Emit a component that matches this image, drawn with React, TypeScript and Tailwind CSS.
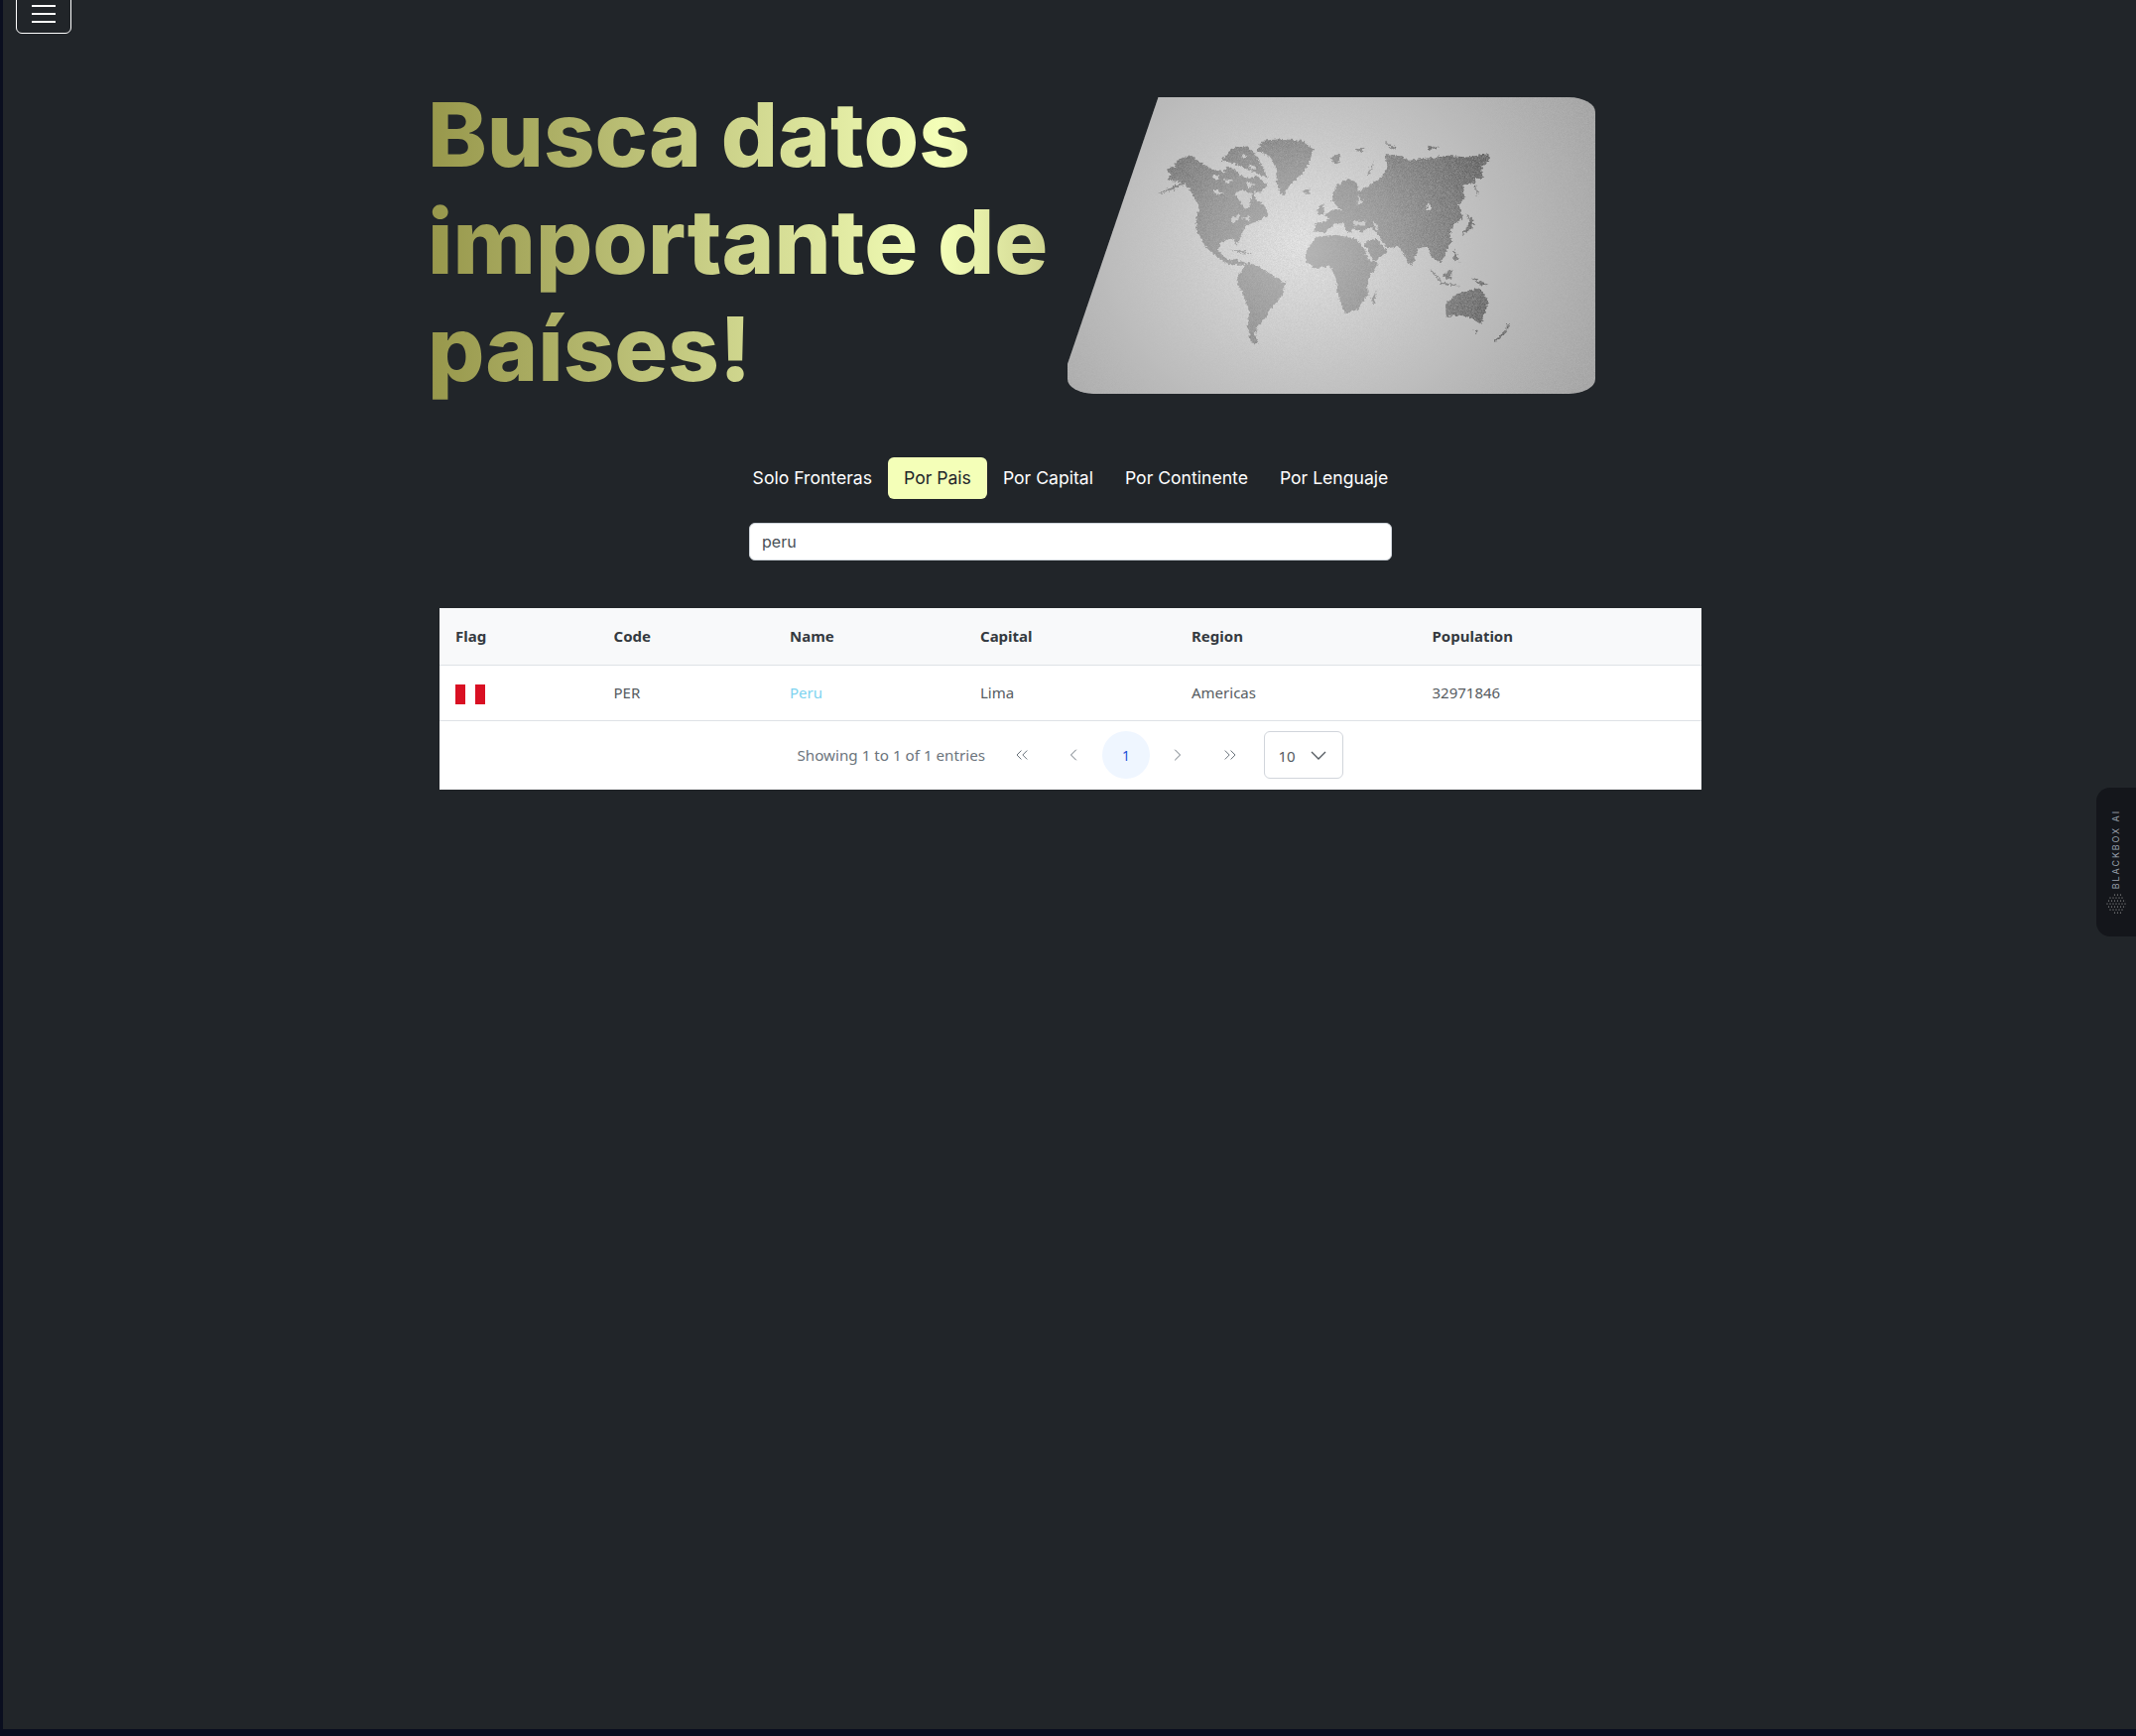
import { ChevronLeft, ChevronRight, ChevronsLeft, ChevronsRight } from "lucide-react";

const tabs = ["Solo Fronteras", "Por Pais", "Por Capital", "Por Continente", "Por Lenguaje"];

// continents traced by hand, in the coordinates of a 1568x990 canvas
const land = [
	"M290,348 L330,325 L355,312 L345,308 L320,305 L325,285 L315,272 L335,262 L350,240 L380,228 L400,245 L425,262 L450,275 L470,280 L478,262 L500,270 L515,290 L540,300 L560,290 L570,300 L590,320 L572,340 L552,340 L560,365 L580,380 L592,410 L560,430 L530,440 L520,470 L505,500 L495,480 L465,490 L455,515 L470,535 L490,550 L505,545 L522,552 L545,562 L535,560 L510,560 L490,562 L465,545 L440,525 L420,505 L410,480 L395,455 L395,420 L405,385 L385,345 L365,315 L340,330 Z",
	"M490,210 L530,200 L555,225 L575,260 L590,300 L560,285 L530,270 L500,255 L465,245 L480,225 Z",
	"M575,185 L630,180 L680,185 L715,210 L700,260 L680,290 L650,320 L630,355 L615,320 L612,270 L598,235 L560,215 Z",
	"M685,335 L705,332 L705,343 L690,345 Z",
	"M762,235 L785,225 L785,250 L770,258 Z",
	"M825,215 L855,205 L845,220 Z",
	"M908,188 L940,205 L930,215 Z",
	"M1025,200 L1055,205 L1030,212 Z",
	"M860,290 L880,245 L868,285 Z",
	"M510,595 L535,553 L565,565 L600,590 L640,615 L625,660 L600,690 L585,720 L565,740 L555,770 L565,800 L545,795 L535,750 L540,700 L520,640 L505,610 Z",
	"M490,515 L525,518 L550,528 L520,525 Z",
	"M725,385 L740,378 L745,408 L728,410 Z",
	"M715,460 L720,435 L755,425 L748,405 L770,392 L792,398 L765,368 L775,322 L805,300 L832,310 L835,340 L860,322 L895,300 L915,265 L910,225 L950,230 L975,245 L1010,240 L1050,235 L1080,230 L1130,235 L1190,225 L1192,245 L1170,270 L1175,300 L1150,300 L1165,368 L1150,315 L1120,320 L1125,360 L1110,380 L1120,420 L1095,440 L1085,470 L1090,490 L1075,520 L1060,555 L1040,540 L1030,530 L1025,505 L1000,510 L980,565 L960,530 L945,505 L915,510 L890,470 L870,445 L845,460 L825,450 L810,465 L795,435 L775,435 L745,462 Z",
	"M695,515 L725,475 L775,470 L825,480 L845,495 L865,545 L890,555 L860,610 L862,650 L835,695 L800,708 L785,670 L775,600 L760,565 L715,570 L695,550 Z",
	"M852,495 L885,480 L915,520 L880,550 L868,530 Z",
	"M885,635 L870,672 L880,675 Z",
	"M1118,470 L1140,430 L1130,405 L1150,425 L1145,450 Z",
	"M1073,680 L1100,650 L1130,640 L1165,630 L1190,670 L1170,740 L1140,720 L1110,712 L1075,718 Z",
	"M1150,755 L1162,758 L1155,768 Z",
	"M1205,790 L1240,755 L1248,745 L1238,735 L1240,760 L1210,793 Z",
	"M1030,570 L1065,612 L1050,605 Z",
	"M1065,590 L1090,575 L1090,600 L1075,605 Z",
	"M1060,612 L1115,625 L1060,620 Z",
	"M1145,600 L1190,620 L1165,622 Z",
	"M1095,510 L1112,550 L1095,545 Z",
];

const water = [
	"M820,428 L858,428 L852,442 L825,442 Z",
	"M875,425 L890,450 L890,462 L878,440 Z",
	"M498,345 L520,335 L548,345 L540,385 L528,392 L512,365 Z",
	"M440,330 L470,345 L450,350 Z",
	"M490,420 L515,405 L510,425 L495,435 Z",
	"M520,420 L545,412 L540,428 Z",
	"M470,300 L495,305 L480,315 Z",
	"M530,310 L555,318 L540,328 Z",
	"M440,290 L460,292 L448,305 Z",
	"M510,260 L525,268 L515,278 Z",
	"M540,255 L560,270 L545,275 Z",
	"M520,225 L535,232 L522,240 Z",
	"M835,350 L850,370 L835,380 Z",
	"M1025,370 L1035,395 L1022,395 Z",
];

function WorldMap() {
	return (
		<svg viewBox="46 54 1434 896" preserveAspectRatio="none" className="block h-full w-full">
			<defs>
				<radialGradient id="paper" gradientUnits="userSpaceOnUse" cx="680" cy="500" r="880">
					<stop offset="0" stopColor="#e8e8e8" />
					<stop offset="0.45" stopColor="#c6c6c6" />
					<stop offset="1" stopColor="#a2a2a2" />
				</radialGradient>
				<radialGradient id="ink" gradientUnits="userSpaceOnUse" cx="680" cy="520" r="540">
					<stop offset="0" stopColor="#b4b4b4" />
					<stop offset="0.5" stopColor="#929292" />
					<stop offset="1" stopColor="#5f5f5f" />
				</radialGradient>
				<filter id="grain" x="0" y="0" width="100%" height="100%">
					<feTurbulence type="fractalNoise" baseFrequency="0.6" numOctaves="2" seed="4" />
					<feColorMatrix values="0 0 0 0 0.5 0 0 0 0 0.5 0 0 0 0 0.5 0.8 0 0 0 -0.2" />
				</filter>
				<filter id="rough" x="-5%" y="-5%" width="110%" height="110%">
					<feTurbulence type="fractalNoise" baseFrequency="0.12" numOctaves="3" seed="8" />
					<feDisplacementMap in="SourceGraphic" scale="14" xChannelSelector="R" yChannelSelector="G" />
				</filter>
			</defs>
			<rect x="46" y="54" width="1434" height="896" fill="url(#paper)" />
			<g filter="url(#rough)">
				{land.map((d, i) => (
					<path key={i} d={d} fill="url(#ink)" />
				))}
				{water.map((d, i) => (
					<path key={i} d={d} fill="#d0d0d0" />
				))}
			</g>
			<rect x="46" y="54" width="1434" height="896" filter="url(#grain)" />
		</svg>
	);
}

function BlackboxDots() {
	const dots: { x: number; y: number }[] = [];
	for (let row = -3; row <= 3; row++) {
		for (let col = -3; col <= 3; col++) {
			if (row * row + col * col > 10) continue;
			dots.push({ x: 10 + col * 3 + (row % 2 ? 1.5 : 0), y: 10 + row * 3 });
		}
	}
	return (
		<svg width="20" height="20" viewBox="0 0 20 20">
			{dots.map((dot, i) => (
				<circle key={i} cx={dot.x} cy={dot.y} r="0.6" fill="#b0b0b0" />
			))}
		</svg>
	);
}

export default function App() {
	return (
		<div className="flex h-[1750px] flex-col overflow-hidden bg-[#0a0e1f]">
			<div className="ml-[3px] h-[1743px] bg-[#212529] font-['Inter',sans-serif]">
				{/* Toggler */}
				<button className="-mt-[6px] ml-[13px] flex h-[40px] w-[56px] flex-col items-center justify-center gap-[6px] rounded-[6px] border border-white">
					<span className="h-[2px] w-[24px] bg-white" />
					<span className="h-[2px] w-[24px] bg-white" />
					<span className="h-[2px] w-[24px] bg-white" />
				</button>

				{/* Hero */}
				<div className="mt-[48px] ml-[428px] flex items-start">
					<h1 className="w-[645px] bg-gradient-to-r from-[#97974b] via-[#f4ffb8] via-80% to-[#c8cc88] bg-clip-text text-[90px] leading-[108px] font-extrabold text-transparent">
						Busca datos importante de países!
					</h1>
					<div className="mt-[16px] h-[299px] w-[532px] overflow-hidden rounded-[5%] [clip-path:polygon(17.2%_0,100%_0,100%_100%,0_100%,0_90%)]">
						<WorldMap />
					</div>
				</div>

				{/* Tabs */}
				<div className="mt-[55px] flex justify-center pl-[2px]">
					{tabs.map((tab) => (
						<button
							key={tab}
							className={
								tab === "Por Pais"
									? "h-[42px] rounded-[6px] bg-[#f4ffb8] px-4 text-[17.6px] text-[#212529]"
									: "h-[42px] px-4 text-[17.6px] text-white"
							}
						>
							{tab}
						</button>
					))}
				</div>

				{/* Search */}
				<div className="mt-[24px] flex justify-center pl-[2px]">
					<input
						readOnly
						value="peru"
						className="h-[38px] w-[648px] rounded-[6px] border border-[#ced4da] bg-white px-3 text-[16px] text-[#495057] outline-none"
					/>
				</div>

				{/* Table */}
				<div className="mt-[48px] ml-[440px] w-[1272px] bg-white font-['Noto_Sans',sans-serif] text-[15px]">
					<table className="w-full table-fixed border-collapse text-left">
						<thead>
							<tr className="h-[57px] border-b border-[#dee2e6] bg-[#f8f9fa] font-bold text-[#343a40]">
								<th className="w-[159.5px] pl-4">Flag</th>
								<th className="w-[177.5px] pl-4">Code</th>
								<th className="w-[192px] pl-4">Name</th>
								<th className="w-[213px] pl-4">Capital</th>
								<th className="w-[242.5px] pl-4">Region</th>
								<th className="pl-4">Population</th>
							</tr>
						</thead>
						<tbody>
							<tr className="h-[56px] border-b border-[#dee2e6] text-[#555b61]">
								<td className="pl-4">
									<div className="mt-[4px] flex h-[20px] w-[30px]">
										<span className="w-[10px] bg-[#d91023]" />
										<span className="w-[10px] bg-white" />
										<span className="w-[10px] bg-[#d91023]" />
									</div>
								</td>
								<td className="pl-4">PER</td>
								<td className="pl-4 text-[#7dd3f0]">Peru</td>
								<td className="pl-4">Lima</td>
								<td className="pl-4">Americas</td>
								<td className="pl-4">32971846</td>
							</tr>
						</tbody>
					</table>

					{/* Paginator */}
					<div className="flex h-[69px] items-center justify-center text-[#6c757d]">
						<span className="mr-[10.7px] text-[15.2px]">Showing 1 to 1 of 1 entries</span>
						<span className="mx-[2.25px] flex h-[48px] w-[48px] items-center justify-center">
							<ChevronsLeft size={20} strokeWidth={1.2} />
						</span>
						<span className="mx-[2.25px] flex h-[48px] w-[48px] items-center justify-center">
							<ChevronLeft size={20} strokeWidth={1.2} />
						</span>
						<span className="mx-[2.25px] flex h-[48px] w-[48px] items-center justify-center rounded-full bg-[#eff6ff] text-[14px] text-[#1d4ed8]">
							1
						</span>
						<span className="mx-[2.25px] flex h-[48px] w-[48px] items-center justify-center">
							<ChevronRight size={20} strokeWidth={1.2} />
						</span>
						<span className="mx-[2.25px] flex h-[48px] w-[48px] items-center justify-center">
							<ChevronsRight size={20} strokeWidth={1.2} />
						</span>
						<div className="ml-[8.3px] flex h-[48px] w-[80px] items-center justify-between rounded-[6px] border border-[#d1d5db] pr-[16px] pl-[13px] text-[#555b61]">
							<span className="pt-[2px]">10</span>
							<svg width="16" height="9" viewBox="0 0 16 9" fill="none" stroke="#555b61" strokeWidth="1.4">
								<path d="M1 1l7 7 7-7" />
							</svg>
						</div>
					</div>
				</div>
			</div>

			{/* Blackbox widget */}
			<div className="fixed top-[794px] right-0 flex h-[150px] w-[40px] flex-col items-center justify-end rounded-l-[14px] bg-[#14161b] pr-[1px] pb-[23px] font-['Inter',sans-serif] text-[#9ca3af]">
				<span className="mb-[5px] text-[9px] tracking-[1.9px] [transform:rotate(180deg)] [writing-mode:vertical-rl]">
					BLACKBOX AI
				</span>
				<BlackboxDots />
			</div>
		</div>
	);
}
